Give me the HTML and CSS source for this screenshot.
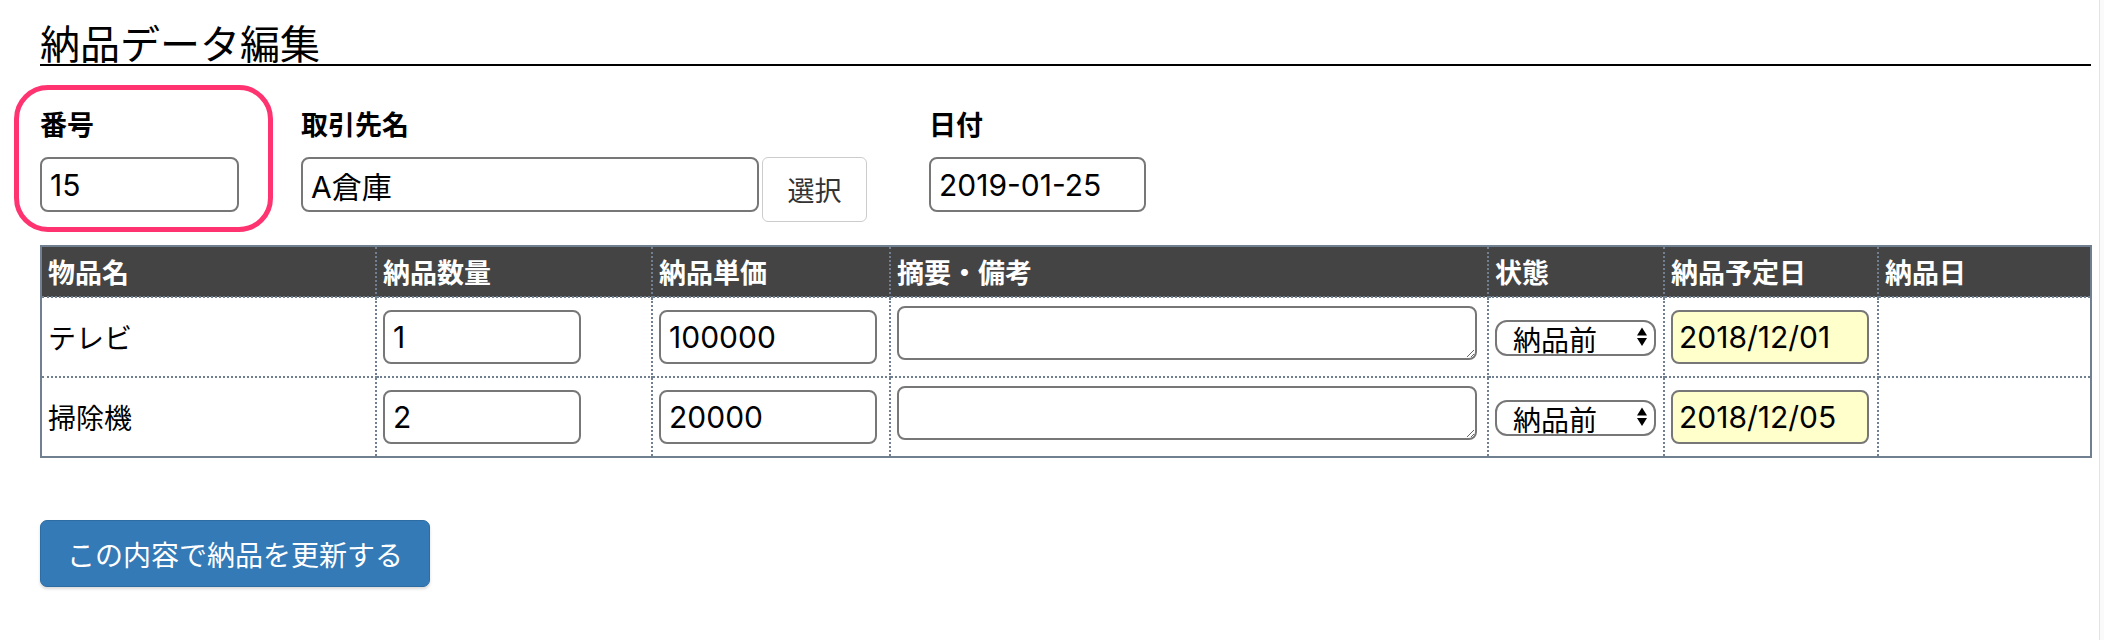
FILE: index.html
```html
<!DOCTYPE html>
<html lang="ja">
  <head>
    <meta charset="UTF-8">
    <title>納品データ編集</title>
    <link rel="stylesheet" href="styles.css">
  </head>
  <body>
    <div class="container">
      <h1 class="page-title">納品データ編集</h1>

      <div class="form-row">
        <div class="field">
          <label for="no">番号</label>
          <input type="text" id="no" class="w-no" value="15">
          <!-- 注目枠 -->
          <div class="highlight"></div>
        </div>
        <div class="field">
          <label for="client">取引先名</label>
          <div class="with-btn">
            <input type="text" id="client" class="w-client" value="A倉庫">
            <button type="button" class="btn-select">選択</button>
          </div>
        </div>
        <div class="field">
          <label for="date">日付</label>
          <input type="text" id="date" class="w-date" value="2019-01-25">
        </div>
      </div>

      <table class="items">
        <colgroup>
          <col class="c-name">
          <col class="c-qty">
          <col class="c-price">
          <col class="c-note">
          <col class="c-status">
          <col class="c-plan">
          <col>
        </colgroup>
        <thead>
          <tr>
            <th>物品名</th>
            <th>納品数量</th>
            <th>納品単価</th>
            <th>摘要・備考</th>
            <th>状態</th>
            <th>納品予定日</th>
            <th>納品日</th>
          </tr>
        </thead>
        <tbody>
          <tr>
            <td>テレビ</td>
            <td><input type="text" class="w-qty" value="1"></td>
            <td><input type="text" class="w-price" value="100000"></td>
            <td><textarea class="note"></textarea></td>
            <td>
              <span class="select-wrap">
                <select><option>納品前</option><option>納品済</option></select>
                <svg width="10" height="20" viewBox="0 0 10 20"><polygon points="0,8.5 5,0.5 10,8.5" /><polygon points="0,11 10,11 5,19" /></svg>
              </span>
            </td>
            <td><input type="text" class="w-plan" value="2018/12/01"></td>
            <td></td>
          </tr>
          <tr>
            <td>掃除機</td>
            <td><input type="text" class="w-qty" value="2"></td>
            <td><input type="text" class="w-price" value="20000"></td>
            <td><textarea class="note"></textarea></td>
            <td>
              <span class="select-wrap">
                <select><option>納品前</option><option>納品済</option></select>
                <svg width="10" height="20" viewBox="0 0 10 20"><polygon points="0,8.5 5,0.5 10,8.5" /><polygon points="0,11 10,11 5,19" /></svg>
              </span>
            </td>
            <td><input type="text" class="w-plan" value="2018/12/05"></td>
            <td></td>
          </tr>
        </tbody>
      </table>

      <button type="submit" class="btn-primary">この内容で納品を更新する</button>
    </div>
  </body>
</html>
```

FILE: styles.css
```css
html {
  background-color: #fafafa;
}
body {
  margin: 0 4px 0 0;
  min-height: 640px;
  background-color: #fff;
  border-right: 1px solid #e3e3e3;
  font-family: "Noto Sans CJK JP", "Liberation Sans", sans-serif;
  color: #000;
}
.container {
  padding: 20px 8px 40px 40px;
}

.page-title {
  margin: 0;
  font-size: 40px;
  font-weight: normal;
  line-height: 44px;
  border-bottom: 2px solid #000;
}

/* 上段フォーム */
.form-row {
  display: flex;
  align-items: flex-start;
  gap: 62px;
  margin-top: 40px;
}
.field {
  position: relative;
}
.field label {
  display: block;
  font-size: 27px;
  font-weight: bold;
  line-height: 36px;
  margin-bottom: 15px;
}
.with-btn {
  display: flex;
  align-items: flex-start;
  gap: 3px;
}

input[type=text], textarea, select {
  box-sizing: border-box;
  font-family: Inter, "Noto Sans CJK JP", sans-serif;
  color: #000;
}
input[type=text] {
  height: 55px;
  padding: 0 8px;
  font-size: 30px;
  border: 2px solid #777;
  border-radius: 8px;
  background-color: #fff;
}
.w-no { width: 199px; }
.w-client { width: 458px; }
.w-date { width: 217px; padding-left: 6px; }

.btn-select {
  width: 105px;
  height: 65px;
  background-color: #fff;
  border: 1px solid #ccc;
  border-radius: 6px;
  font-family: "Noto Sans CJK JP", sans-serif;
  font-size: 27px;
  color: #333;
  cursor: pointer;
}

.highlight {
  position: absolute;
  left: -26px;
  right: -34px;
  top: -21px;
  bottom: -20px;
  border: 5px solid #fe3370;
  border-radius: 34px;
  pointer-events: none;
}

/* 明細テーブル */
.items {
  width: 2052px;
  margin-top: 23px;
  border-collapse: collapse;
  table-layout: fixed;
  border: 2px solid #708090;
}
.c-name { width: 335px; }
.c-qty { width: 276px; }
.c-price { width: 238px; }
.c-note { width: 598px; }
.c-status { width: 176px; }
.c-plan { width: 214px; }

.items th, .items td {
  border: 2px dotted #708090;
  padding: 0 6px;
  text-align: left;
}
.items th {
  height: 49px;
  background-color: #444;
  color: #fff;
  font-size: 27px;
  font-weight: bold;
}
.items td {
  height: 78px;
  font-size: 28px;
}
.items td input[type=text] {
  display: block;
  height: 54px;
}
.w-qty { width: 198px; }
.w-price { width: 218px; }
.w-plan {
  width: 198px;
  padding-left: 6px !important;
  background-color: #ffffcc !important;
}

.note {
  display: block;
  width: 580px;
  height: 54px;
  margin-bottom: 8px;
  border: 2px solid #777;
  border-radius: 8px;
  font-size: 28px;
}

.select-wrap {
  position: relative;
  display: inline-block;
  vertical-align: middle;
}
.select-wrap select {
  appearance: none;
  -webkit-appearance: none;
  width: 161px;
  height: 36px;
  padding: 2px 0 0 16px;
  font-family: "Noto Sans CJK JP", sans-serif;
  font-size: 28px;
  line-height: 30px;
  border: 2px solid #777;
  border-radius: 12px;
  background-color: #fff;
}
.select-wrap svg {
  position: absolute;
  right: 9px;
  top: 8px;
  fill: #000;
  pointer-events: none;
}

.btn-primary {
  display: block;
  height: 67px;
  margin-top: 62px;
  padding: 0 26px;
  background-color: #337ab7;
  border: 1px solid #2e6da4;
  border-radius: 7px;
  box-shadow: 0 2px 3px rgba(0, 0, 0, 0.15);
  color: #fff;
  font-family: "Noto Sans CJK JP", sans-serif;
  font-size: 28px;
  cursor: pointer;
}
```
